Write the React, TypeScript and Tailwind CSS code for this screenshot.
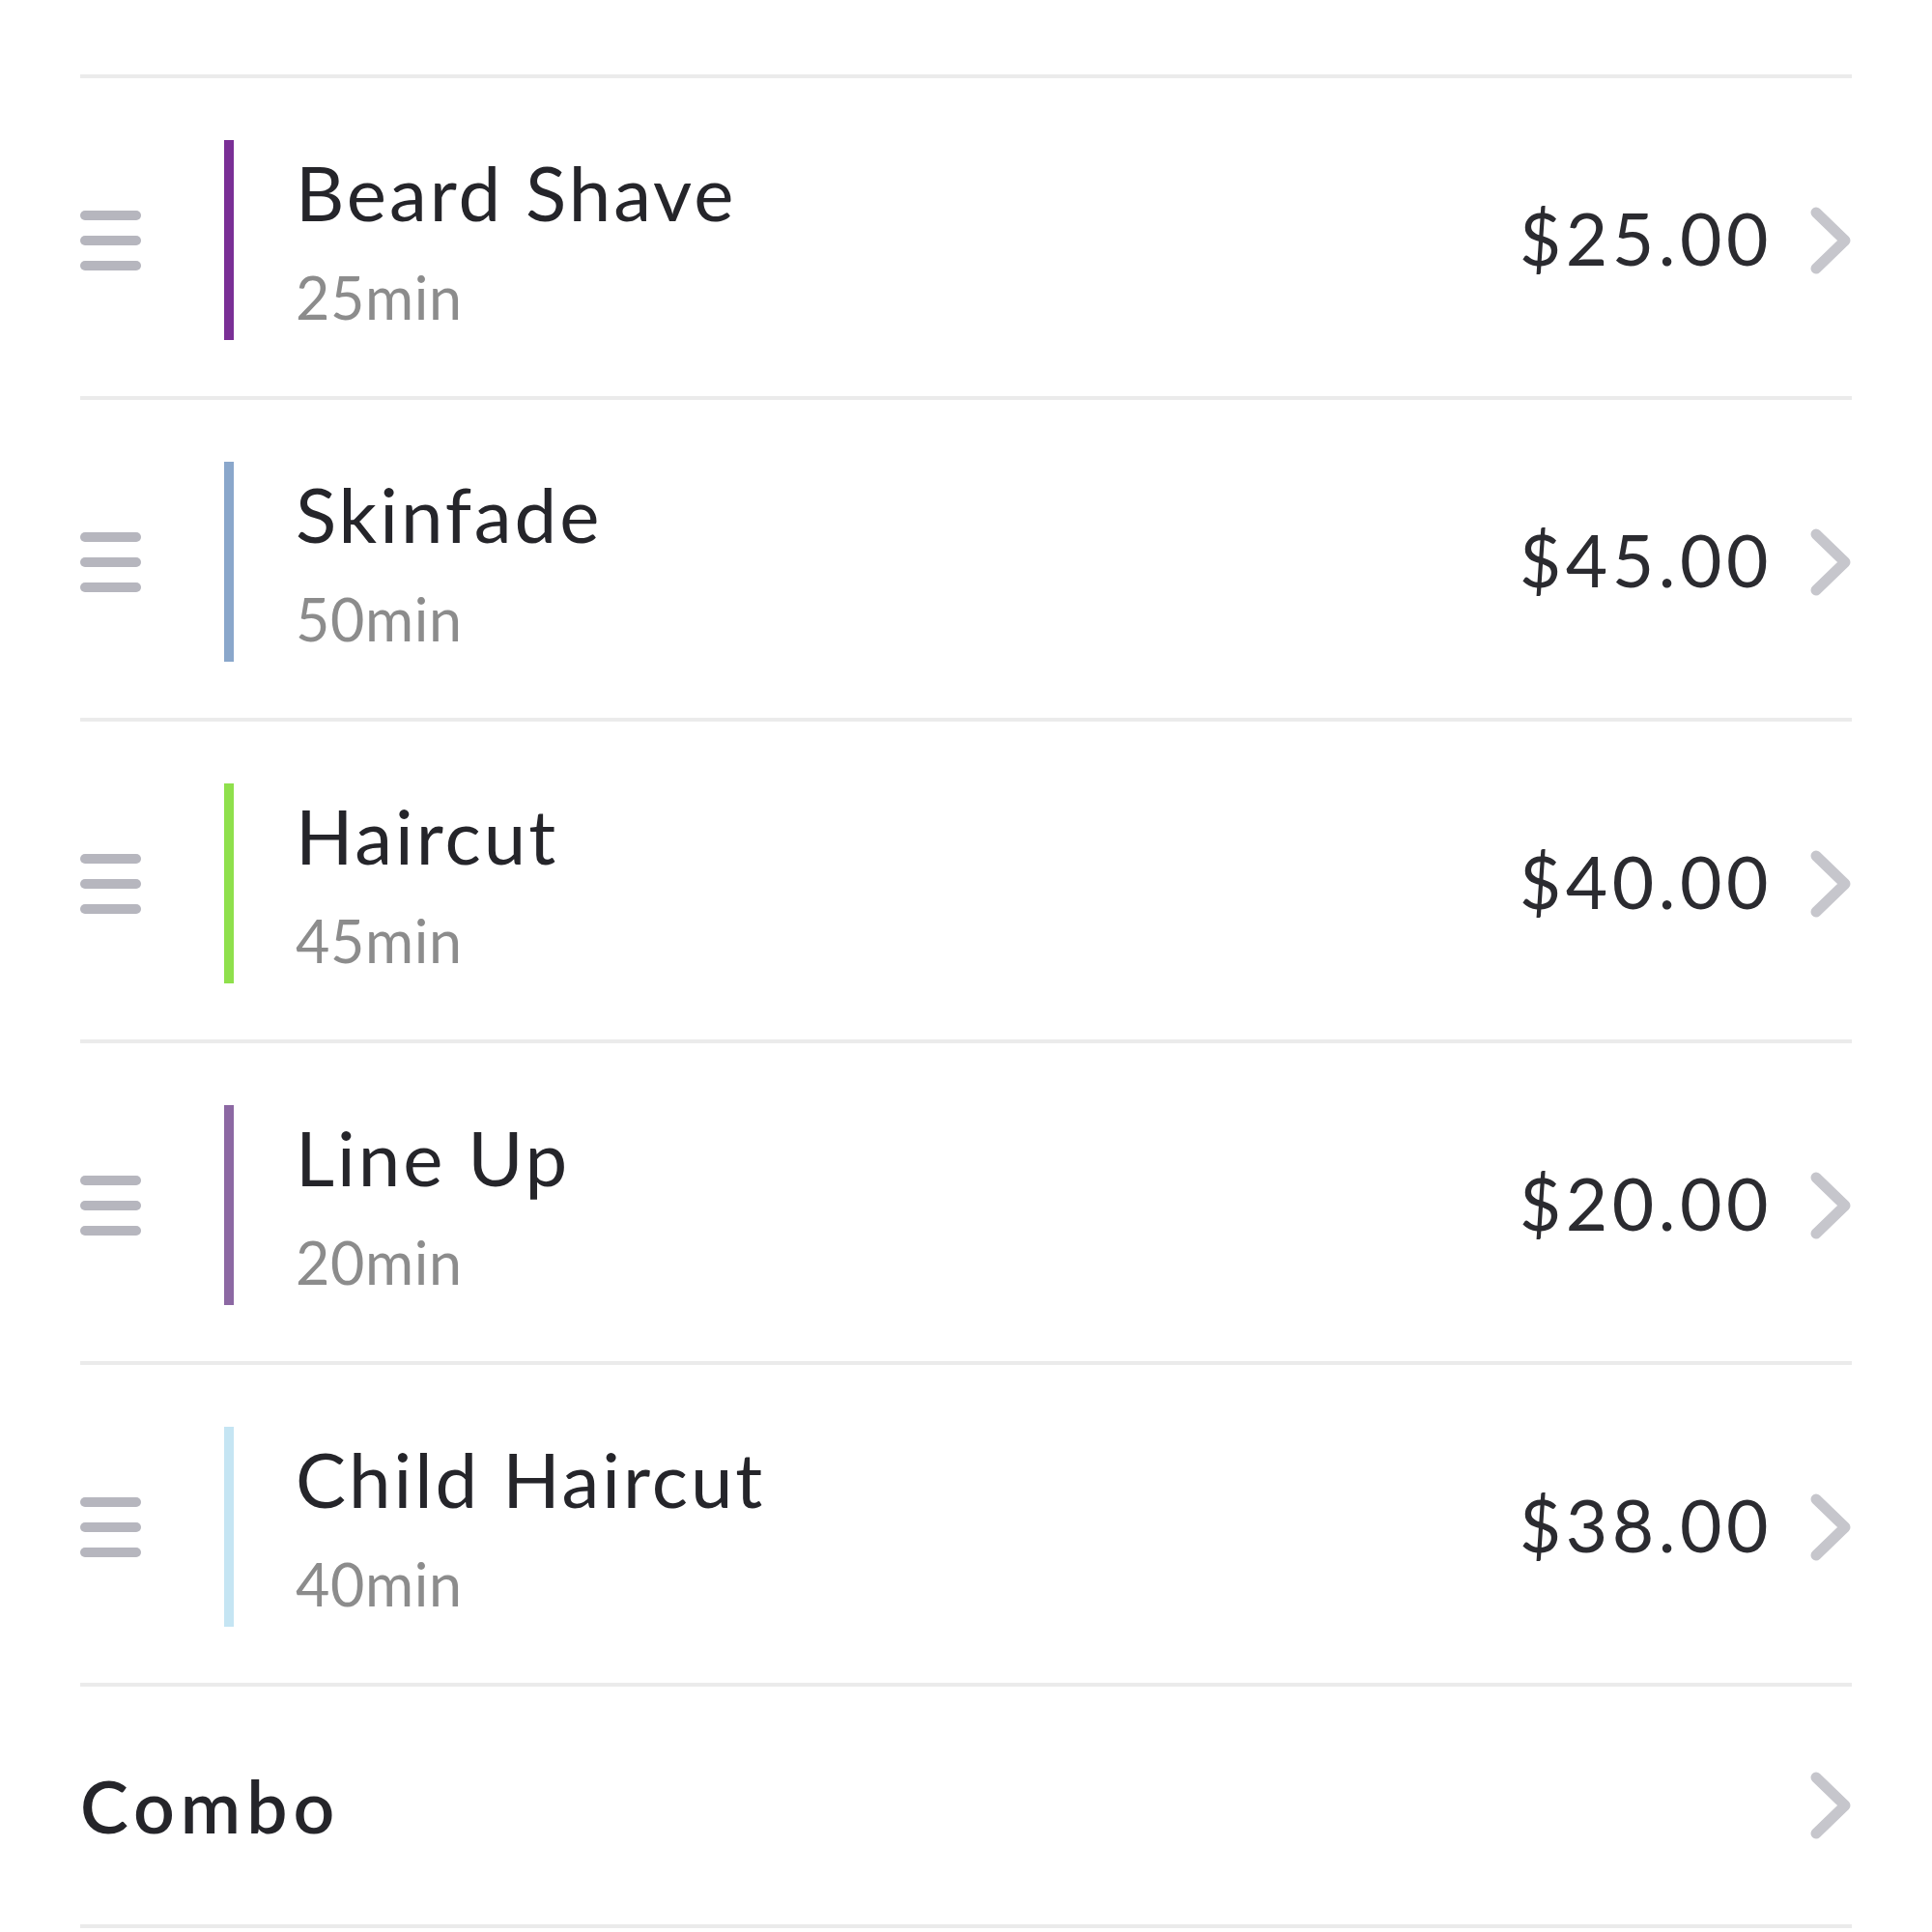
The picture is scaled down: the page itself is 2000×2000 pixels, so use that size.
import React from "react";

type Service = { name: string; duration: string; price: string; color: string };

const services: Service[] = [
  { name: "Beard Shave", duration: "25min", price: "$25.00", color: "bg-[#7a2f96]" },
  { name: "Skinfade", duration: "50min", price: "$45.00", color: "bg-[#8aa7cb]" },
  { name: "Haircut", duration: "45min", price: "$40.00", color: "bg-[#8fe04c]" },
  { name: "Line Up", duration: "20min", price: "$20.00", color: "bg-[#8c68a3]" },
  { name: "Child Haircut", duration: "40min", price: "$38.00", color: "bg-[#c5e5f3]" },
];

function Chevron() {
  return (
    <svg width="44" height="72" viewBox="0 0 44 72" className="shrink-0">
      <polyline
        points="7,7 37,36 7,65"
        fill="none"
        stroke="#c6c6cc"
        strokeWidth="11"
        strokeLinecap="round"
        strokeLinejoin="round"
      />
    </svg>
  );
}

function Handle() {
  return (
    <div className="flex w-[63px] shrink-0 flex-col gap-[16px]">
      <div className="h-[10px] w-full rounded-full bg-[#b6b6be]" />
      <div className="h-[10px] w-full rounded-full bg-[#b6b6be]" />
      <div className="h-[10px] w-full rounded-full bg-[#b6b6be]" />
    </div>
  );
}

export default function App() {
  return (
    <div
      className="h-[2000px] w-[2000px] overflow-hidden bg-white px-[83px] pt-[77px]"
      style={{ fontFamily: "Lato, 'Open Sans', sans-serif" }}
    >
      {services.map((s) => (
        <div
          key={s.name}
          className="flex h-[333px] items-center border-t-[4px] border-[#ebebeb] pt-[6px]"
        >
          <Handle />
          <div className={`ml-[86px] h-[207px] w-[10px] shrink-0 ${s.color}`} />
          <div className="ml-[64px] flex flex-1 flex-col">
            <div className="text-[78px] leading-none tracking-[0.038em] text-[#25252a]">{s.name}</div>
            <div className="mt-[39px] text-[61px] leading-none tracking-[0.01em] text-[#8c8c8c]">{s.duration}</div>
          </div>
          <div className="mr-[38px] mb-[4px] text-[75px] leading-none tracking-[0.06em] text-[#2b2b30]">{s.price}</div>
          <Chevron />
        </div>
      ))}
      <div className="flex h-[254px] items-center border-y-[4px] border-[#ebebeb]">
        <div className="flex-1 text-[75px] font-semibold leading-none tracking-[0.08em] text-[#25252a]">Combo</div>
        <Chevron />
      </div>
    </div>
  );
}
